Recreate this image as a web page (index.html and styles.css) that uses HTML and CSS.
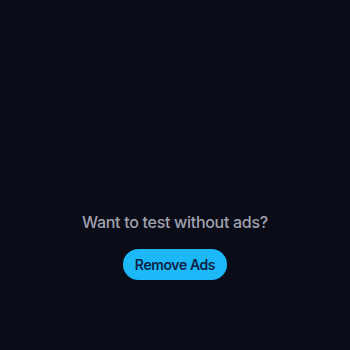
FILE: index.html
```html
<!DOCTYPE html>
<html>
<head>
<meta charset="utf-8">
<link rel="stylesheet" href="styles.css">
</head>
<body>
<main class="screen">
  <div class="promo">
    <p class="promo-text">Want to test without ads?</p>
    <button class="promo-btn">Remove Ads</button>
  </div>
</main>
</body>
</html>
```
FILE: styles.css
```css
html, body {
  margin: 0;
  padding: 0;
  background: #0a0c18;
}
.screen {
  width: 350px;
  height: 350px;
  display: flex;
  flex-direction: column;
  align-items: center;
  padding-top: 211px;
  box-sizing: border-box;
  font-family: Inter, "Noto Sans", sans-serif;
}
.promo {
  display: flex;
  flex-direction: column;
  align-items: center;
  gap: 16px;
}
.promo-text {
  margin: 0;
  color: #a0a1ae;
  font-size: 16px;
  font-weight: 500;
  line-height: 22px;
  letter-spacing: -0.3px;
}
.promo-btn {
  border: none;
  background: #1cb8f7;
  color: #0c2344;
  font-family: inherit;
  font-size: 14px;
  font-weight: 600;
  letter-spacing: -0.4px;
  height: 31px;
  width: 104px;
  border-radius: 16px;
  padding: 0;
}
```
